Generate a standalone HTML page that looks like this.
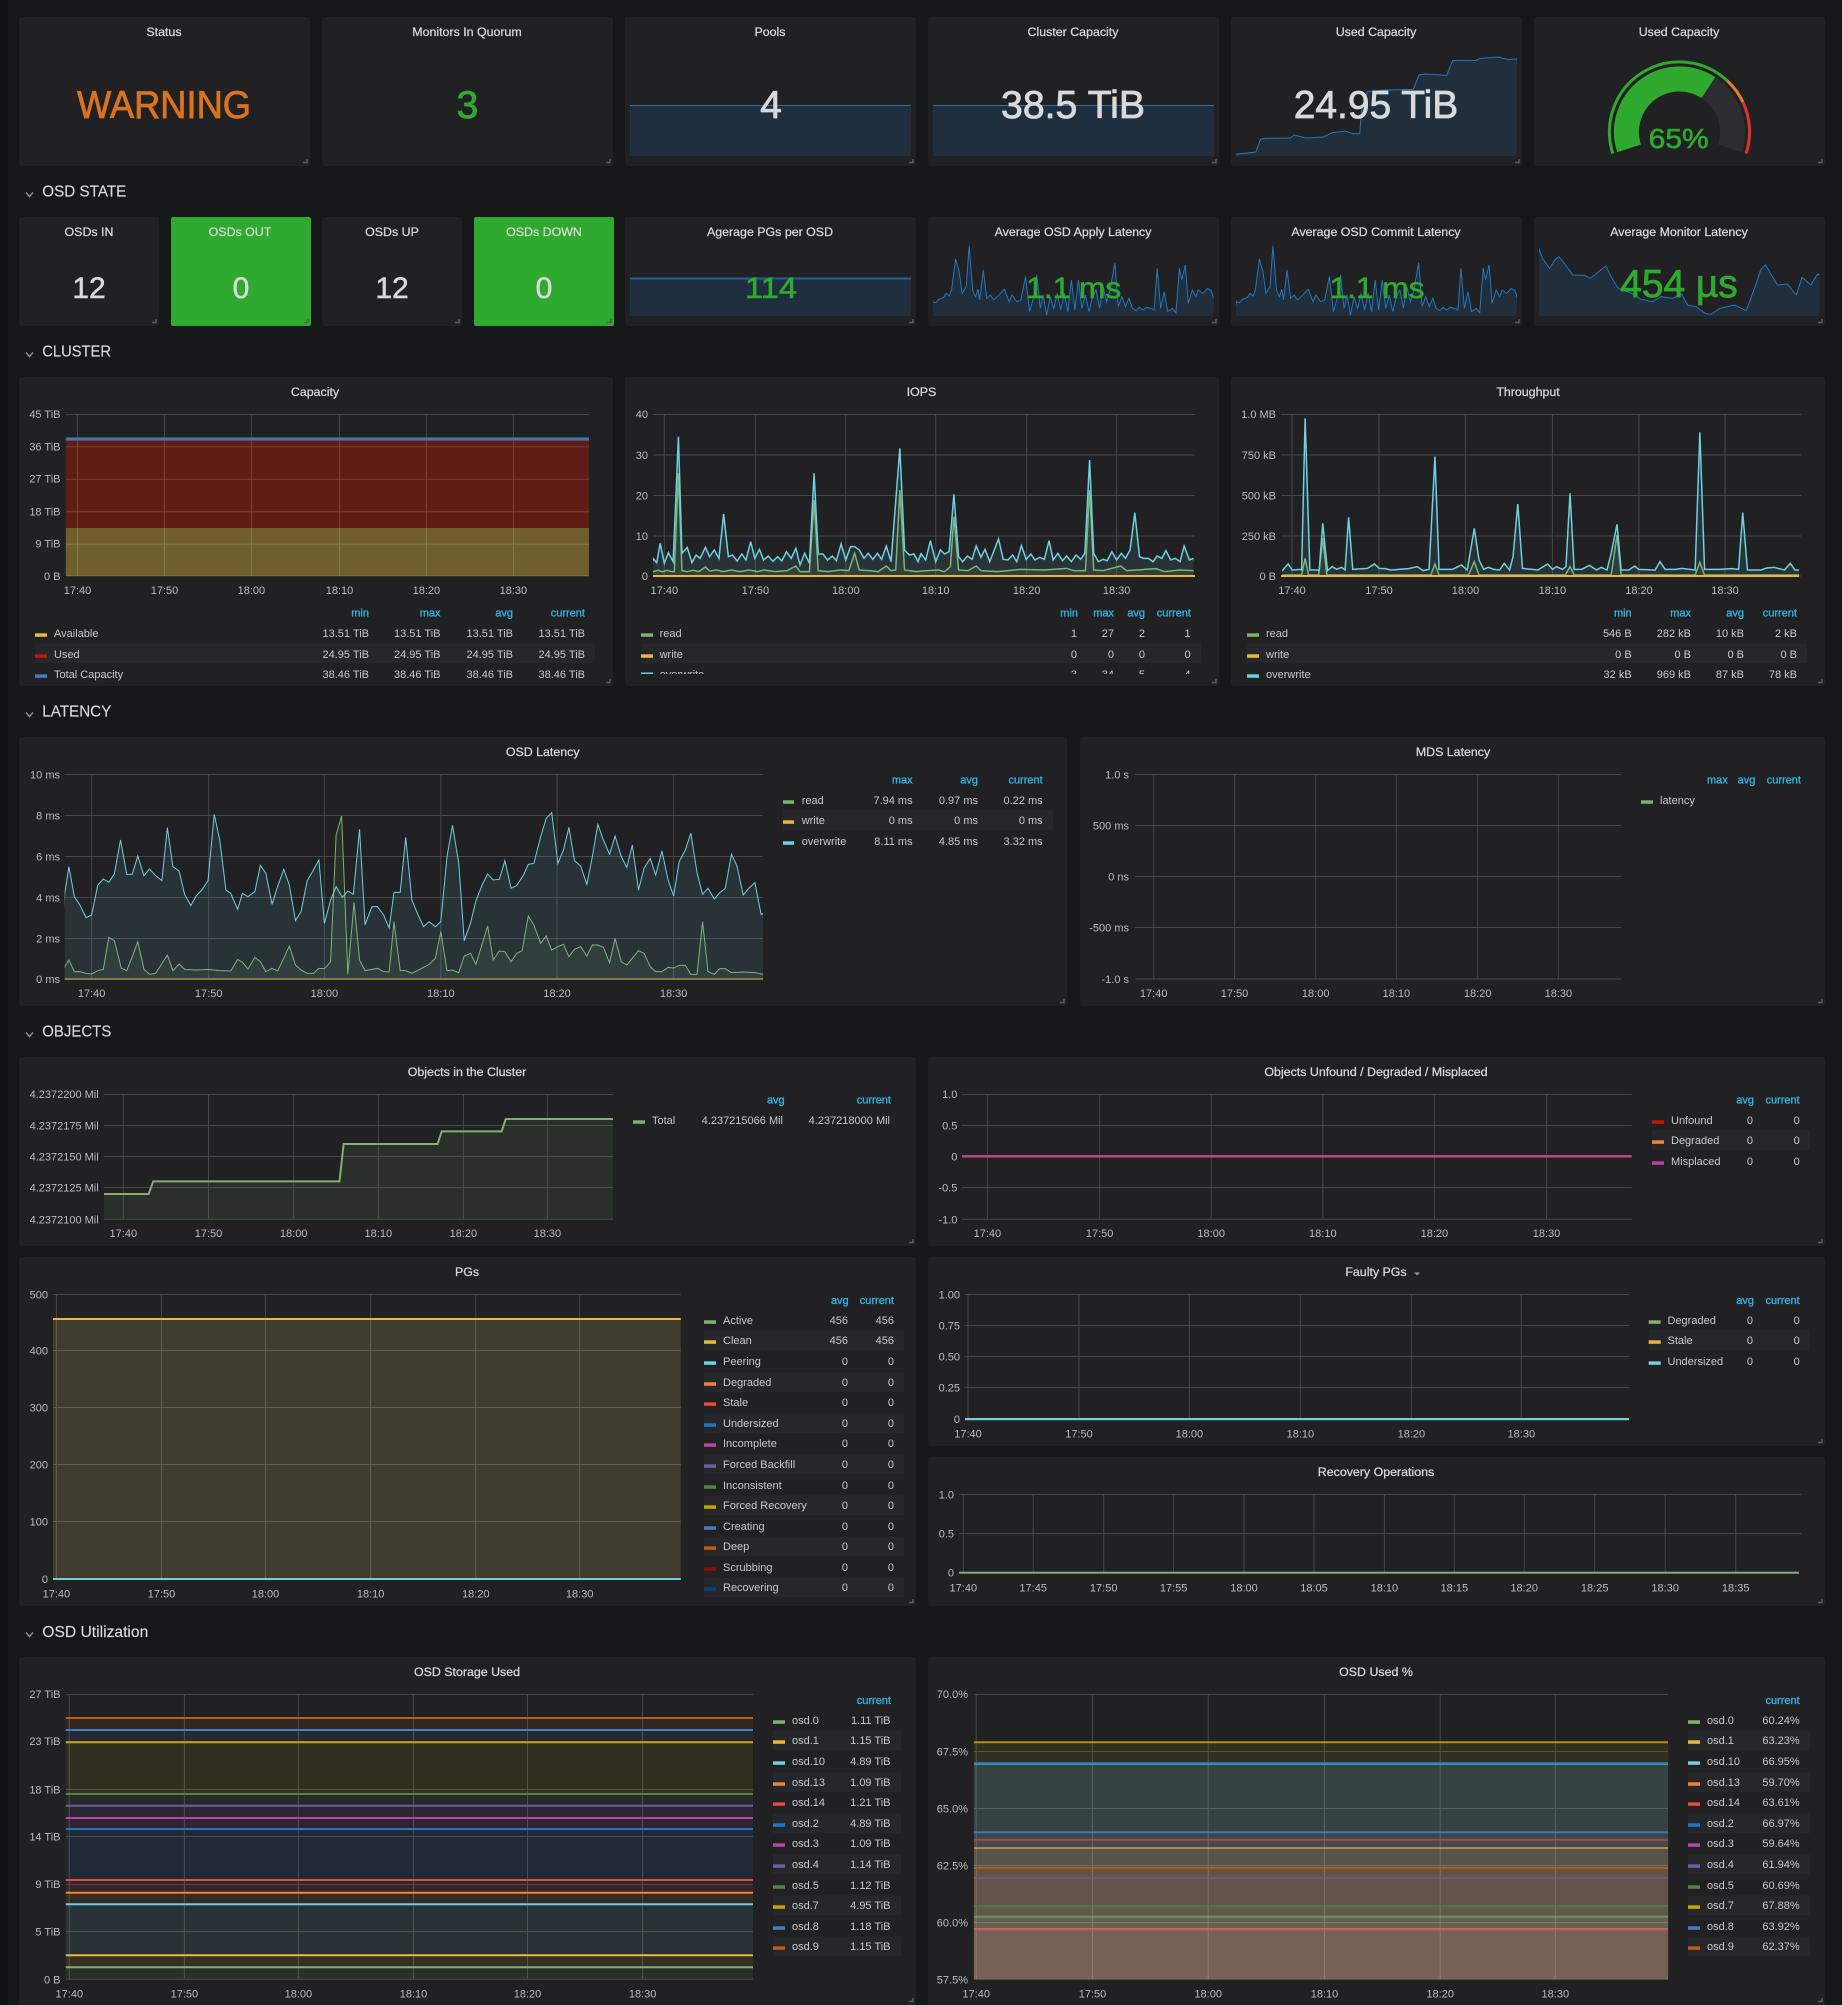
<!DOCTYPE html>
<html lang="en">
<head>
<meta charset="utf-8">
<title>Ceph Cluster Dashboard</title>
<style>
html,body{margin:0;padding:0;background:#161719;width:1842px;height:2005px;overflow:hidden}
svg{display:block}
text{font-family:"Liberation Sans",Arial,sans-serif}
.T{font-size:12.4px;fill:#d8d9da;text-anchor:middle;stroke:#d8d9da;stroke-width:.25}
.S{font-size:15.5px;fill:#d8d9da;stroke:#d8d9da;stroke-width:.15}
.a{font-size:11px;fill:#bcbcbd}
.e{text-anchor:end}
.m{text-anchor:middle}
.L{font-size:11px;fill:#c8c9ca;transform:translateY(-.4px)}
.V{font-size:11px;fill:#c8c9ca;text-anchor:end;transform:translateY(-.4px)}
.H{font-size:11px;fill:#33b5e5;text-anchor:end;stroke:#33b5e5;stroke-width:.3;transform:translateY(-.4px)}
.B{font-size:39px;fill:#d8d9da;text-anchor:middle;stroke:#d8d9da;stroke-width:.8}
.M{font-size:30px;fill:#d8d9da;text-anchor:middle;stroke:#d8d9da;stroke-width:.5}
.G39{font-size:39px;fill:#2fa92e;text-anchor:middle;stroke:#2fa92e;stroke-width:.8}
.G30{font-size:30px;fill:#2fa92e;text-anchor:middle;stroke:#2fa92e;stroke-width:.6}
.g{stroke:rgba(255,255,255,.17);stroke-width:1;fill:none}
.l{vector-effect:non-scaling-stroke;fill:none}
.p{fill:#212124}
.h{fill:none;stroke:#5c5c5e;stroke-width:1.5}
.c{fill:none;stroke:#8e8e8e;stroke-width:1.5}
.r{fill:#26272a}
.sp{vector-effect:non-scaling-stroke;stroke:#1f78c1;stroke-width:1;fill:#1f78c1;fill-opacity:.15}
.ln{vector-effect:non-scaling-stroke}
</style>
</head>
<body>
<svg xmlns="http://www.w3.org/2000/svg" width="1842" height="2005" viewBox="0 0 1842 2005">
<defs>
<clipPath id="cUsed"><rect x="1236" y="40" width="281" height="120"/></clipPath>
<clipPath id="cA"><rect x="933" y="240" width="280.5" height="80"/></clipPath>
<clipPath id="cB"><rect x="1236" y="240" width="281" height="80"/></clipPath>
<clipPath id="cC"><rect x="1539" y="240" width="280.5" height="80"/></clipPath>
<clipPath id="cIL"><rect x="653" y="410" width="268" height="170"/></clipPath>
<clipPath id="cIR"><rect x="921" y="410" width="272.5" height="170"/></clipPath>
<clipPath id="cT"><rect x="1282.2" y="410" width="516.8" height="170"/></clipPath>
<clipPath id="cLat"><rect x="64.7" y="770" width="698.3" height="212"/></clipPath>
<clipPath id="cObj"><rect x="104" y="1090" width="509" height="132"/></clipPath>
<clipPath id="cLeg"><rect x="630" y="600" width="590" height="74"/></clipPath>
</defs>

<rect width="1842" height="2005" fill="#161719"/>
<rect width="8" height="2005" fill="#111214"/>

<!-- panels -->
<rect class="p" x="19" y="17" width="291" height="149" rx="3"/>
<rect class="p" x="322" y="17" width="291" height="149" rx="3"/>
<rect class="p" x="625" y="17" width="291" height="149" rx="3"/>
<rect class="p" x="928" y="17" width="291" height="149" rx="3"/>
<rect class="p" x="1231" y="17" width="291" height="149" rx="3"/>
<rect class="p" x="1534" y="17" width="291" height="149" rx="3"/>
<rect class="p" x="19" y="217" width="140" height="109" rx="3"/>
<rect x="171" y="217" width="140" height="109" rx="2" fill="#2fa92e"/>
<rect class="p" x="322" y="217" width="140" height="109" rx="3"/>
<rect x="474" y="217" width="140" height="109" rx="2" fill="#2fa92e"/>
<rect class="p" x="625" y="217" width="291" height="109" rx="3"/>
<rect class="p" x="928" y="217" width="291" height="109" rx="3"/>
<rect class="p" x="1231" y="217" width="291" height="109" rx="3"/>
<rect class="p" x="1534" y="217" width="291" height="109" rx="3"/>
<rect class="p" x="19" y="377" width="594" height="309" rx="3"/>
<rect class="p" x="625" y="377" width="594" height="309" rx="3"/>
<rect class="p" x="1231" y="377" width="594" height="309" rx="3"/>
<rect class="p" x="19" y="737" width="1048" height="269" rx="3"/>
<rect class="p" x="1080" y="737" width="745" height="269" rx="3"/>
<rect class="p" x="19" y="1057" width="897" height="189" rx="3"/>
<rect class="p" x="928" y="1057" width="897" height="189" rx="3"/>
<rect class="p" x="19" y="1257" width="897" height="349" rx="3"/>
<rect class="p" x="928" y="1257" width="897" height="189" rx="3"/>
<rect class="p" x="928" y="1457" width="897" height="149" rx="3"/>
<rect class="p" x="19" y="1657" width="897" height="360" rx="3"/>
<rect class="p" x="928" y="1657" width="897" height="360" rx="3"/>

<!-- resize handles -->
<path class="h" d="M307 159v3.5h-4M610 159v3.5h-4M913 159v3.5h-4M1216 159v3.5h-4M1519 159v3.5h-4M1822 159v3.5h-4M156 319v3.5h-4M308 319v3.5h-4M459 319v3.5h-4M611 319v3.5h-4M913 319v3.5h-4M1216 319v3.5h-4M1519 319v3.5h-4M1822 319v3.5h-4M610 679v3.5h-4M1216 679v3.5h-4M1822 679v3.5h-4M1064 999v3.5h-4M1822 999v3.5h-4M913 1239v3.5h-4M1822 1239v3.5h-4M913 1599v3.5h-4M1822 1439v3.5h-4M1822 1599v3.5h-4M913 1998v3.5h-4M1822 1998v3.5h-4"/>

<!-- section headers -->
<path class="c" d="M26 192.5l3.5 4 3.5-4M26 352.5l3.5 4 3.5-4M26 712.5l3.5 4 3.5-4M26 1032.5l3.5 4 3.5-4M26 1632.5l3.5 4 3.5-4"/>
<text class="S" x="42.3" y="196.3" textLength="84" lengthAdjust="spacingAndGlyphs">OSD STATE</text>
<text class="S" x="42.3" y="356.6" textLength="68.7" lengthAdjust="spacingAndGlyphs">CLUSTER</text>
<text class="S" x="42.3" y="716.6" textLength="69" lengthAdjust="spacingAndGlyphs">LATENCY</text>
<text class="S" x="42.3" y="1036.3" textLength="69" lengthAdjust="spacingAndGlyphs">OBJECTS</text>
<text class="S" x="42.3" y="1637" textLength="106" lengthAdjust="spacingAndGlyphs">OSD Utilization</text>

<!-- row 1 -->
<text class="T" x="164" y="36">Status</text>
<text class="T" x="467" y="36">Monitors In Quorum</text>
<text class="T" x="770" y="36">Pools</text>
<text class="T" x="1073" y="36">Cluster Capacity</text>
<text class="T" x="1376" y="36">Used Capacity</text>
<text class="T" x="1679" y="36">Used Capacity</text>

<text x="164" y="118" font-size="39" text-anchor="middle" fill="#d9731f" stroke="#d9731f" stroke-width=".8" textLength="174" lengthAdjust="spacingAndGlyphs">WARNING</text>
<text class="G39" x="467.5" y="118">3</text>

<rect x="630" y="105" width="281" height="51" fill="#202f3f"/>
<path d="M630 105.5H911" stroke="#2a6fb0" stroke-width="1"/>
<text class="B" x="771" y="118">4</text>

<rect x="933" y="105" width="281" height="51" fill="#202f3f"/>
<path d="M933 105.5H1214" stroke="#2a6fb0" stroke-width="1"/>
<text class="B" x="1073" y="118" textLength="144" lengthAdjust="spacingAndGlyphs">38.5 TiB</text>

<g clip-path="url(#cUsed)"><g transform="translate(921,0) scale(.58737,.33333)">
<polyline class="sp" points="530,468 536,463 570,456 578,418 585,415 628,414 636,405 655,414 685,411 700,398 715,395 722,393 735,401 747,401 750,330 760,275 790,270 838,268 848,225 858,222 878,224 895,226 905,182 945,181 952,175 985,171 990,175 1000,178 1015,177 1022,468"/>
</g></g>
<text class="B" x="1376" y="118" textLength="164.5" lengthAdjust="spacingAndGlyphs">24.95 TiB</text>

<!-- gauge -->
<path d="M1629.1 148.4A53 53 0 0 1 1708.5 87.6" fill="none" stroke="#2fa92e" stroke-width="25"/>
<path d="M1708.5 87.6A53 53 0 0 1 1729.9 148.4" fill="none" stroke="#2d2d30" stroke-width="25"/>
<path d="M1612.9 153.6A70 70 0 0 1 1727.5 81" fill="none" stroke="#2fa92e" stroke-width="3"/>
<path d="M1727.5 81A70 70 0 0 1 1743 102.2" fill="none" stroke="#e2802b" stroke-width="3"/>
<path d="M1743 102.2A70 70 0 0 1 1746.1 153.6" fill="none" stroke="#e0302f" stroke-width="3"/>
<text x="1678.7" y="148" font-size="28" text-anchor="middle" fill="#2fa92e" stroke="#2fa92e" stroke-width=".6" textLength="60" lengthAdjust="spacingAndGlyphs">65%</text>

<!-- row 2 -->
<text class="T" x="89" y="236">OSDs IN</text>
<text class="T" x="240" y="236">OSDs OUT</text>
<text class="T" x="392" y="236">OSDs UP</text>
<text class="T" x="544" y="236">OSDs DOWN</text>
<text class="T" x="770" y="236">Agerage PGs per OSD</text>
<text class="T" x="1073" y="236">Average OSD Apply Latency</text>
<text class="T" x="1376" y="236">Average OSD Commit Latency</text>
<text class="T" x="1679" y="236">Average Monitor Latency</text>
<text class="M" x="89" y="298">12</text>
<text class="M" x="241" y="298">0</text>
<text class="M" x="392" y="298">12</text>
<text class="M" x="544" y="298">0</text>

<rect x="630" y="278" width="281" height="38" fill="#202f3f"/>
<path d="M630 278.5H911" stroke="#1f5f9d" stroke-width="2"/>
<text class="G30" x="771" y="298" textLength="52" lengthAdjust="spacingAndGlyphs">114</text>

<g clip-path="url(#cA)"><g transform="translate(921,0) scale(.58737,.33333)">
<polyline class="sp" points="14,948 20,905 25,908 30,898 38,893 43,880 48,888 52,870 59,777 65,815 70,880 77,860 82,737 88,870 93,890 97,868 100,900 106,810 112,895 118,885 124,900 130,890 142,868 150,905 155,885 163,905 170,900 178,830 185,935 192,890 197,825 203,925 208,885 214,945 220,890 226,925 232,880 238,930 244,880 250,935 256,840 262,930 268,840 274,925 280,885 286,935 292,890 298,870 304,925 310,860 316,905 322,870 330,788 336,920 342,890 348,920 354,895 360,925 366,932 372,922 378,930 384,922 392,925 397,930 402,805 408,925 414,875 420,935 428,925 434,938 440,805 444,840 450,795 455,910 462,870 468,890 472,870 480,880 488,865 494,872 498,893 504,948"/>
</g></g>
<g clip-path="url(#cB)"><g transform="translate(1224.8,0) scale(.58737,.33333)">
<polyline class="sp" points="14,948 20,905 25,908 30,898 38,893 43,880 48,888 52,870 59,777 65,815 70,880 77,860 82,737 88,870 93,890 97,868 100,900 106,810 112,895 118,885 124,900 130,890 142,868 150,905 155,885 163,905 170,900 178,830 185,935 192,890 197,825 203,925 208,885 214,945 220,890 226,925 232,880 238,930 244,880 250,935 256,840 262,930 268,840 274,925 280,885 286,935 292,890 298,870 304,925 310,860 316,905 322,870 330,788 336,920 342,890 348,920 354,895 360,925 366,932 372,922 378,930 384,922 392,925 397,930 402,805 408,925 414,875 420,935 428,925 434,938 440,805 444,840 450,795 455,910 462,870 468,890 472,870 480,880 488,865 494,872 498,893 504,948"/>
</g></g>
<g clip-path="url(#cC)"><g transform="translate(921,0) scale(.58737,.33333)">
<polyline class="sp" points="1046,948 1052,745 1058,775 1070,805 1080,778 1086,770 1095,790 1110,825 1130,826 1140,835 1150,820 1166,798 1175,830 1185,860 1190,868 1210,880 1225,897 1245,905 1260,890 1280,895 1295,882 1305,915 1320,920 1335,940 1345,943 1360,925 1385,915 1405,932 1420,860 1430,808 1438,795 1458,855 1475,852 1490,885 1500,832 1515,855 1526,823 1531,825 1537,948"/>
</g></g>
<text class="G30" x="1073.7" y="298" textLength="95" lengthAdjust="spacingAndGlyphs">1.1 ms</text>
<text class="G30" x="1377" y="298" textLength="95" lengthAdjust="spacingAndGlyphs">1.1 ms</text>
<text class="G39" x="1679" y="297" textLength="117.5" lengthAdjust="spacingAndGlyphs">454 µs</text>

<!-- CLUSTER: Capacity -->
<text class="T" x="315" y="396">Capacity</text>
<rect x="65.8" y="440" width="523.2" height="88" fill="#5e1d15"/>
<rect x="65.8" y="528" width="523.2" height="48" fill="#705e2d"/>
<path class="g" d="M65.8 414.5H589M65.8 446.8H589M65.8 479.2H589M65.8 511.8H589M65.8 544.2H589M65.8 576H589M77.5 414V576M164.5 414V576M251.4 414V576M339.5 414V576M426.4 414V576M513.4 414V576"/>
<rect x="65.8" y="437.4" width="523.2" height="3.2" fill="#4673b0"/>
<text class="a e" x="60.5" y="418">45 TiB</text>
<text class="a e" x="60.5" y="450.3">36 TiB</text>
<text class="a e" x="60.5" y="482.7">27 TiB</text>
<text class="a e" x="60.5" y="515.3">18 TiB</text>
<text class="a e" x="60.5" y="547.7">9 TiB</text>
<text class="a e" x="60.5" y="580">0 B</text>
<text class="a m" x="77.5" y="594">17:40</text>
<text class="a m" x="164.5" y="594">17:50</text>
<text class="a m" x="251.4" y="594">18:00</text>
<text class="a m" x="339.5" y="594">18:10</text>
<text class="a m" x="426.4" y="594">18:20</text>
<text class="a m" x="513.4" y="594">18:30</text>
<text class="H" x="369" y="617">min</text>
<text class="H" x="440.5" y="617">max</text>
<text class="H" x="513" y="617">avg</text>
<text class="H" x="585" y="617">current</text>
<rect class="r" x="35" y="643.3" width="560" height="19.7"/>
<rect x="35" y="633.3" width="12" height="3.5" fill="#eab839"/>
<rect x="35" y="654.3" width="12" height="3.5" fill="#bf1b00"/>
<rect x="35" y="674.3" width="12" height="3.5" fill="#447ebc"/>
<text class="L" x="54" y="637.3">Available</text>
<text class="L" x="54" y="658.3">Used</text>
<text class="L" x="54" y="678.3">Total Capacity</text>
<text class="V" x="369" y="637.3">13.51 TiB</text><text class="V" x="440.5" y="637.3">13.51 TiB</text><text class="V" x="513" y="637.3">13.51 TiB</text><text class="V" x="585" y="637.3">13.51 TiB</text>
<text class="V" x="369" y="658.3">24.95 TiB</text><text class="V" x="440.5" y="658.3">24.95 TiB</text><text class="V" x="513" y="658.3">24.95 TiB</text><text class="V" x="585" y="658.3">24.95 TiB</text>
<text class="V" x="369" y="678.3">38.46 TiB</text><text class="V" x="440.5" y="678.3">38.46 TiB</text><text class="V" x="513" y="678.3">38.46 TiB</text><text class="V" x="585" y="678.3">38.46 TiB</text>

<!-- CLUSTER: IOPS -->
<text class="T" x="921.5" y="396">IOPS</text>
<path class="g" d="M653 414.5H1195M653 455H1195M653 495.5H1195M653 536H1195M653 576H1195M664.3 414V576M755.4 414V576M845.8 414V576M935.7 414V576M1026.7 414V576M1116.6 414V576"/>
<g clip-path="url(#cIL)"><g transform="translate(0,340) scale(.58737,.33333)">
<polyline class="ln" fill="#7eb26d" fill-opacity=".1" stroke="#7eb26d" stroke-width="1.5" points="1106,708 1112,695 1120,691 1128,695 1136,691 1144,695 1148,695 1155,400 1161,692 1170,695 1180,691 1190,695 1201,681 1208,693 1220,690 1232,695 1245,690 1260,695 1275,690 1290,695 1300,690 1320,695 1340,692 1355,678 1362,695 1378,695 1386,480 1393,692 1410,695 1430,690 1445,692 1455,640 1463,690 1480,692 1495,695 1509,678 1517,692 1525,690 1532,450 1540,690 1560,695 1568,693 1574,708"/>
<polyline class="ln" fill="#6ed0e0" fill-opacity=".1" stroke="#6ed0e0" stroke-width="1.5" points="1106,708 1112,655 1118,668 1124,610 1131,670 1138,638 1146,665 1150,500 1155,290 1161,640 1170,622 1178,668 1185,645 1192,655 1201,622 1208,650 1216,630 1224,655 1232,522 1240,650 1247,645 1255,663 1263,642 1270,660 1278,605 1285,655 1293,628 1300,660 1308,648 1316,664 1324,650 1331,663 1339,635 1347,655 1355,625 1362,675 1370,640 1378,670 1386,400 1393,642 1401,642 1409,660 1417,648 1424,662 1432,612 1440,660 1448,620 1455,620 1463,630 1471,655 1478,640 1486,658 1494,640 1501,658 1509,618 1517,665 1532,325 1540,630 1548,645 1556,642 1563,665 1568,640 1574,708"/>
</g></g>
<g clip-path="url(#cIR)"><g transform="translate(921,340) scale(.58737,.33333)">
<polyline class="ln" fill="#7eb26d" fill-opacity=".1" stroke="#7eb26d" stroke-width="1.5" points="-6,708 0,693 30,690 40,695 50,680 56,530 64,690 80,692 94,678 102,692 130,695 170,688 210,690 248,685 260,692 280,692 287,450 294,690 310,692 340,678 350,692 400,686 415,695 440,690 464,692 470,708"/>
<polyline class="ln" fill="#6ed0e0" fill-opacity=".1" stroke="#6ed0e0" stroke-width="1.5" points="-6,708 0,640 8,660 16,602 25,665 33,630 40,642 48,635 56,463 64,650 71,665 79,648 87,658 94,618 102,652 109,628 117,665 132,597 140,658 148,660 156,645 163,665 171,617 179,658 187,642 194,660 202,652 210,658 218,602 225,660 233,640 241,662 248,648 256,665 264,645 272,658 279,640 287,360 294,640 302,665 310,658 317,662 325,635 333,660 341,640 348,655 356,630 364,518 372,650 379,655 387,655 395,665 402,648 410,655 417,632 425,660 433,655 441,665 448,618 457,660 464,655 470,708"/>
</g></g>
<rect x="653" y="575" width="542" height="2" fill="#eab839"/>
<text class="a e" x="648" y="418">40</text>
<text class="a e" x="648" y="459">30</text>
<text class="a e" x="648" y="499.5">20</text>
<text class="a e" x="648" y="540">10</text>
<text class="a e" x="648" y="580">0</text>
<text class="a m" x="664.3" y="594">17:40</text>
<text class="a m" x="755.4" y="594">17:50</text>
<text class="a m" x="845.8" y="594">18:00</text>
<text class="a m" x="935.7" y="594">18:10</text>
<text class="a m" x="1026.7" y="594">18:20</text>
<text class="a m" x="1116.6" y="594">18:30</text>
<text class="H" x="1078" y="617">min</text>
<text class="H" x="1114" y="617">max</text>
<text class="H" x="1145" y="617">avg</text>
<text class="H" x="1191" y="617">current</text>
<rect class="r" x="641" y="643.3" width="560" height="19.7"/>
<rect x="641" y="633.3" width="12" height="3.5" fill="#7eb26d"/>
<rect x="641" y="654.3" width="12" height="3.5" fill="#eab839"/>
<rect x="641" y="672.5" width="12" height="1.5" fill="#6ed0e0"/>
<text class="L" x="659.6" y="637.3">read</text>
<text class="L" x="659.6" y="658.3">write</text>
<text class="V" x="1077" y="637.3">1</text><text class="V" x="1114" y="637.3">27</text><text class="V" x="1145" y="637.3">2</text><text class="V" x="1190.6" y="637.3">1</text>
<text class="V" x="1077" y="658.3">0</text><text class="V" x="1114" y="658.3">0</text><text class="V" x="1145" y="658.3">0</text><text class="V" x="1190.6" y="658.3">0</text>
<g clip-path="url(#cLeg)">
<text class="L" x="659.6" y="678.3">overwrite</text>
<text class="V" x="1077" y="678.3">3</text><text class="V" x="1114" y="678.3">34</text><text class="V" x="1145" y="678.3">5</text><text class="V" x="1190.6" y="678.3">4</text>
</g>

<!-- CLUSTER: Throughput -->
<text class="T" x="1528" y="396">Throughput</text>
<path class="g" d="M1281 414.5H1801M1281 455H1801M1281 495.5H1801M1281 536H1801M1281 576H1801M1292 414V576M1379 414V576M1465.5 414V576M1552.4 414V576M1639 414V576M1725 414V576"/>
<g clip-path="url(#cT)"><g transform="translate(921,340) scale(.58737,.33333)">
<polyline class="ln" fill="#7eb26d" fill-opacity=".1" stroke="#7eb26d" stroke-width="1.5" points="607,708 613,705 648,705 654,655 660,705 677,705 684,595 691,705 868,705 875,672 882,705 932,705 942,665 950,705 1097,705 1105,680 1112,705 1175,705 1185,585 1192,705 1318,705 1326,667 1334,705 1495,705 1501,708"/>
<polyline class="ln" fill="#6ed0e0" fill-opacity=".1" stroke="#6ed0e0" stroke-width="1.5" points="609,708 615,692 625,672 632,690 645,688 648,690 654,235 662,690 672,690 678,690 684,550 692,692 700,680 708,688 716,682 722,690 728,532 735,688 760,685 772,672 780,685 790,686 800,690 830,686 845,680 855,692 865,688 875,350 882,688 905,688 920,675 930,690 942,565 950,660 958,688 966,682 975,688 985,690 993,670 1002,690 1008,650 1016,492 1024,685 1050,690 1067,672 1075,688 1082,680 1092,688 1098,680 1105,460 1112,688 1125,688 1138,676 1150,690 1158,682 1168,690 1175,640 1185,553 1192,690 1205,690 1215,678 1222,688 1250,690 1258,665 1267,688 1285,688 1295,685 1318,690 1326,277 1334,688 1360,688 1380,686 1392,688 1399,518 1407,690 1430,690 1440,684 1452,682 1470,690 1480,670 1488,690 1495,690 1501,708"/>
</g></g>
<rect x="1281" y="575" width="518" height="2" fill="#eab839"/>
<text class="a e" x="1276" y="418">1.0 MB</text>
<text class="a e" x="1276" y="459">750 kB</text>
<text class="a e" x="1276" y="499.5">500 kB</text>
<text class="a e" x="1276" y="540">250 kB</text>
<text class="a e" x="1276" y="580">0 B</text>
<text class="a m" x="1292" y="594">17:40</text>
<text class="a m" x="1379" y="594">17:50</text>
<text class="a m" x="1465.5" y="594">18:00</text>
<text class="a m" x="1552.4" y="594">18:10</text>
<text class="a m" x="1639" y="594">18:20</text>
<text class="a m" x="1725" y="594">18:30</text>
<text class="H" x="1631.7" y="617">min</text>
<text class="H" x="1691" y="617">max</text>
<text class="H" x="1744" y="617">avg</text>
<text class="H" x="1797" y="617">current</text>
<rect class="r" x="1247" y="643.3" width="560" height="19.7"/>
<rect x="1247" y="633.3" width="12" height="3.5" fill="#7eb26d"/>
<rect x="1247" y="654.3" width="12" height="3.5" fill="#eab839"/>
<rect x="1247" y="674.3" width="12" height="3.5" fill="#6ed0e0"/>
<text class="L" x="1266" y="637.3">read</text>
<text class="L" x="1266" y="658.3">write</text>
<text class="L" x="1266" y="678.3">overwrite</text>
<text class="V" x="1631.7" y="637.3">546 B</text><text class="V" x="1691" y="637.3">282 kB</text><text class="V" x="1744" y="637.3">10 kB</text><text class="V" x="1797" y="637.3">2 kB</text>
<text class="V" x="1631.7" y="658.3">0 B</text><text class="V" x="1691" y="658.3">0 B</text><text class="V" x="1744" y="658.3">0 B</text><text class="V" x="1797" y="658.3">0 B</text>
<text class="V" x="1631.7" y="678.3">32 kB</text><text class="V" x="1691" y="678.3">969 kB</text><text class="V" x="1744" y="678.3">87 kB</text><text class="V" x="1797" y="678.3">78 kB</text>

<!-- LATENCY: OSD -->
<text class="T" x="542.7" y="756">OSD Latency</text>
<path class="g" d="M64.7 774.5H763M64.7 815.5H763M64.7 856.5H763M64.7 897.5H763M64.7 938.5H763M64.7 979H763M91.6 774V979M208.7 774V979M324.4 774V979M440.8 774V979M557 774V979M673.6 774V979"/>
<g clip-path="url(#cLat)"><g transform="translate(0,730) scale(.68878,.33333)">
<polyline class="ln" fill="#7eb26d" fill-opacity=".1" stroke="#7eb26d" stroke-width="1" points="88,747 94,710 100,690 108,725 116,725 125,730 133,732 142,722 150,718 158,622 166,632 176,714 184,722 192,680 200,635 209,718 217,733 226,730 243,675 251,722 260,702 268,718 285,720 302,718 319,722 335,723 345,688 352,697 360,717 370,682 378,695 386,725 395,715 403,723 412,685 420,648 429,705 437,720 446,730 455,730 463,715 471,716 480,695 488,315 496,258 505,733 514,517 522,690 530,722 548,715 557,725 565,726 572,575 581,722 589,722 598,730 615,712 623,703 632,685 640,605 649,722 657,720 666,728 674,678 683,670 691,703 708,588 716,690 725,663 733,665 742,695 750,670 758,662 767,558 775,585 785,640 793,618 801,660 810,650 818,643 826,680 834,658 843,650 852,678 860,645 868,645 876,652 885,698 893,625 902,695 910,705 927,662 935,670 944,710 952,725 961,725 970,712 978,714 986,706 995,706 1003,733 1012,733 1020,575 1028,725 1037,733 1045,716 1053,716 1062,728 1079,726 1096,728 1108,733 1114,747"/>
<polyline class="ln" fill="#6ed0e0" fill-opacity=".1" stroke="#6ed0e0" stroke-width="1" points="88,747 94,490 100,410 108,500 116,525 125,563 133,555 142,465 150,447 158,457 166,432 175,330 184,433 192,433 200,378 209,437 217,417 226,437 235,452 243,293 251,410 260,423 268,493 277,527 285,497 293,480 302,452 311,253 319,330 328,480 335,490 345,538 352,490 360,500 370,485 378,406 386,430 395,523 403,470 412,418 420,465 429,572 437,545 446,452 455,420 463,390 471,580 480,510 488,470 497,502 505,483 513,493 522,298 530,584 540,530 548,530 557,555 565,594 572,487 581,487 589,322 598,510 606,550 615,590 623,575 632,590 640,575 649,380 657,286 666,400 674,632 683,580 691,512 700,465 708,432 716,450 725,448 733,392 742,475 750,467 760,435 767,403 775,400 785,320 793,265 801,248 810,400 818,360 826,292 834,392 843,408 852,463 860,380 868,283 876,330 885,373 893,318 902,380 910,412 918,345 927,480 935,415 944,385 952,435 961,363 970,450 978,498 986,395 995,360 1003,310 1012,428 1020,493 1028,475 1037,507 1045,488 1053,475 1062,373 1070,408 1079,495 1087,475 1096,458 1105,553 1108,550 1114,747"/>
</g></g>
<rect x="64.7" y="978" width="698.3" height="2" fill="#8a7a3e"/>
<text class="a e" x="60" y="778.3">10 ms</text>
<text class="a e" x="60" y="819.3">8 ms</text>
<text class="a e" x="60" y="860.3">6 ms</text>
<text class="a e" x="60" y="901.3">4 ms</text>
<text class="a e" x="60" y="942.3">2 ms</text>
<text class="a e" x="60" y="983">0 ms</text>
<text class="a m" x="91.6" y="997">17:40</text>
<text class="a m" x="208.7" y="997">17:50</text>
<text class="a m" x="324.4" y="997">18:00</text>
<text class="a m" x="440.8" y="997">18:10</text>
<text class="a m" x="557" y="997">18:20</text>
<text class="a m" x="673.6" y="997">18:30</text>
<text class="H" x="912.6" y="784">max</text>
<text class="H" x="978" y="784">avg</text>
<text class="H" x="1042.7" y="784">current</text>
<rect class="r" x="783" y="810" width="270" height="20"/>
<rect x="783" y="800.3" width="11" height="3.5" fill="#7eb26d"/>
<rect x="783" y="820.3" width="11" height="3.5" fill="#eab839"/>
<rect x="783" y="841.3" width="11" height="3.5" fill="#6ed0e0"/>
<text class="L" x="801.7" y="804.3">read</text>
<text class="L" x="801.7" y="824.3">write</text>
<text class="L" x="801.7" y="845.3">overwrite</text>
<text class="V" x="912.6" y="804.3">7.94 ms</text><text class="V" x="978" y="804.3">0.97 ms</text><text class="V" x="1042.7" y="804.3">0.22 ms</text>
<text class="V" x="912.6" y="824.3">0 ms</text><text class="V" x="978" y="824.3">0 ms</text><text class="V" x="1042.7" y="824.3">0 ms</text>
<text class="V" x="912.6" y="845.3">8.11 ms</text><text class="V" x="978" y="845.3">4.85 ms</text><text class="V" x="1042.7" y="845.3">3.32 ms</text>

<!-- LATENCY: MDS -->
<text class="T" x="1453" y="756">MDS Latency</text>
<path class="g" d="M1135 774.5H1621M1135 825.5H1621M1135 876.5H1621M1135 927.5H1621M1135 979H1621M1153.7 774V979M1234.5 774V979M1315.7 774V979M1396.4 774V979M1477.7 774V979M1558.4 774V979"/>
<text class="a e" x="1129" y="778.3">1.0 s</text>
<text class="a e" x="1129" y="829.3">500 ms</text>
<text class="a e" x="1129" y="880.3">0 ns</text>
<text class="a e" x="1129" y="931.3">-500 ms</text>
<text class="a e" x="1129" y="983">-1.0 s</text>
<text class="a m" x="1153.7" y="997">17:40</text>
<text class="a m" x="1234.5" y="997">17:50</text>
<text class="a m" x="1315.7" y="997">18:00</text>
<text class="a m" x="1396.4" y="997">18:10</text>
<text class="a m" x="1477.7" y="997">18:20</text>
<text class="a m" x="1558.4" y="997">18:30</text>
<text class="H" x="1727.8" y="784">max</text>
<text class="H" x="1755.4" y="784">avg</text>
<text class="H" x="1801" y="784">current</text>
<rect x="1641" y="800.3" width="12" height="3.5" fill="#7eb26d"/>
<text class="L" x="1660" y="804.3">latency</text>

<!-- OBJECTS: cluster -->
<text class="T" x="467" y="1076">Objects in the Cluster</text>
<path class="g" d="M104 1094.5H613M104 1125.5H613M104 1156.5H613M104 1187.5H613M104 1219.3H613M123.3 1094V1219M208.5 1094V1219M293.7 1094V1219M378.3 1094V1219M463.4 1094V1219M547.4 1094V1219"/>
<g clip-path="url(#cObj)"><g transform="translate(0,1020) scale(.58737,.33333)">
<polyline class="ln" fill="#7eb26d" fill-opacity=".1" stroke="#7eb26d" stroke-width="2" points="170,598 172,522 253,522 261,484 578,484 585,372 745,372 752,334 854,334 861,297 1050,297 1052,598"/>
</g></g>
<text class="a e" x="98.7" y="1098">4.2372200 Mil</text>
<text class="a e" x="98.7" y="1129.3">4.2372175 Mil</text>
<text class="a e" x="98.7" y="1160.3">4.2372150 Mil</text>
<text class="a e" x="98.7" y="1191.3">4.2372125 Mil</text>
<text class="a e" x="98.7" y="1223.3">4.2372100 Mil</text>
<text class="a m" x="123.3" y="1237">17:40</text>
<text class="a m" x="208.5" y="1237">17:50</text>
<text class="a m" x="293.7" y="1237">18:00</text>
<text class="a m" x="378.3" y="1237">18:10</text>
<text class="a m" x="463.4" y="1237">18:20</text>
<text class="a m" x="547.4" y="1237">18:30</text>
<text class="H" x="784.7" y="1104">avg</text>
<text class="H" x="891" y="1104">current</text>
<rect x="633" y="1120.3" width="12" height="3.5" fill="#7eb26d"/>
<text class="L" x="652" y="1124.3">Total</text>
<text class="V" x="783" y="1124.3">4.237215066 Mil</text>
<text class="V" x="890" y="1124.3">4.237218000 Mil</text>

<!-- OBJECTS: unfound -->
<text class="T" x="1376" y="1076">Objects Unfound / Degraded / Misplaced</text>
<path class="g" d="M962 1094.5H1631.7M962 1125.5H1631.7M962 1156.5H1631.7M962 1187.5H1631.7M962 1219.3H1631.7M987.4 1094V1219M1099.6 1094V1219M1211.2 1094V1219M1322.8 1094V1219M1434.4 1094V1219M1546.5 1094V1219"/>
<rect x="962" y="1155" width="669.7" height="2.6" fill="#b6458f"/>
<text class="a e" x="957.4" y="1098">1.0</text>
<text class="a e" x="957.4" y="1129.3">0.5</text>
<text class="a e" x="957.4" y="1160.3">0</text>
<text class="a e" x="957.4" y="1191.3">-0.5</text>
<text class="a e" x="957.4" y="1223.3">-1.0</text>
<text class="a m" x="987.4" y="1237">17:40</text>
<text class="a m" x="1099.6" y="1237">17:50</text>
<text class="a m" x="1211.2" y="1237">18:00</text>
<text class="a m" x="1322.8" y="1237">18:10</text>
<text class="a m" x="1434.4" y="1237">18:20</text>
<text class="a m" x="1546.5" y="1237">18:30</text>
<text class="H" x="1754" y="1104">avg</text>
<text class="H" x="1799.7" y="1104">current</text>
<rect class="r" x="1652" y="1130" width="158" height="20"/>
<rect x="1652" y="1120.3" width="12" height="3.5" fill="#bf1b00"/>
<rect x="1652" y="1140.3" width="12" height="3.5" fill="#ef843c"/>
<rect x="1652" y="1161.3" width="12" height="3.5" fill="#ba43a9"/>
<text class="L" x="1671" y="1124.3">Unfound</text>
<text class="L" x="1671" y="1144.3">Degraded</text>
<text class="L" x="1671" y="1165.3">Misplaced</text>
<text class="V" x="1753" y="1124.3">0</text><text class="V" x="1799.7" y="1124.3">0</text>
<text class="V" x="1753" y="1144.3">0</text><text class="V" x="1799.7" y="1144.3">0</text>
<text class="V" x="1753" y="1165.3">0</text><text class="V" x="1799.7" y="1165.3">0</text>

<!-- PGs -->
<text class="T" x="467" y="1276">PGs</text>
<rect x="53" y="1319" width="627.8" height="260" fill="#3f3c2d"/>
<path class="g" d="M53 1294.5H680.8M53 1350.5H680.8M53 1407.5H680.8M53 1464.5H680.8M53 1521.5H680.8M56.4 1294V1579M161.5 1294V1579M265.5 1294V1579M370.6 1294V1579M475.8 1294V1579M579.7 1294V1579"/>
<rect x="53" y="1318" width="627.8" height="2" fill="#eab839"/>
<rect x="53" y="1578" width="627.8" height="2" fill="#6ed0e0"/>
<text class="a e" x="48" y="1298.3">500</text>
<text class="a e" x="48" y="1354.3">400</text>
<text class="a e" x="48" y="1411.3">300</text>
<text class="a e" x="48" y="1468.3">200</text>
<text class="a e" x="48" y="1525.3">100</text>
<text class="a e" x="48" y="1583">0</text>
<text class="a m" x="56.4" y="1597.3">17:40</text>
<text class="a m" x="161.5" y="1597.3">17:50</text>
<text class="a m" x="265.5" y="1597.3">18:00</text>
<text class="a m" x="370.6" y="1597.3">18:10</text>
<text class="a m" x="475.8" y="1597.3">18:20</text>
<text class="a m" x="579.7" y="1597.3">18:30</text>
<text class="H" x="848.7" y="1304.3">avg</text>
<text class="H" x="894" y="1304.3">current</text>
<g transform="translate(704,1320.3)"><rect width="12" height="3.5" fill="#7eb26d"/><text class="L" x="19" y="4">Active</text><text class="V" x="144" y="4">456</text><text class="V" x="190" y="4">456</text></g>
<g transform="translate(704,1340.3)"><rect class="r" y="-10" width="200" height="20"/><rect width="12" height="3.5" fill="#eab839"/><text class="L" x="19" y="4">Clean</text><text class="V" x="144" y="4">456</text><text class="V" x="190" y="4">456</text></g>
<g transform="translate(704,1361.3)"><rect width="12" height="3.5" fill="#6ed0e0"/><text class="L" x="19" y="4">Peering</text><text class="V" x="144" y="4">0</text><text class="V" x="190" y="4">0</text></g>
<g transform="translate(704,1382.3)"><rect class="r" y="-10" width="200" height="20"/><rect width="12" height="3.5" fill="#ef843c"/><text class="L" x="19" y="4">Degraded</text><text class="V" x="144" y="4">0</text><text class="V" x="190" y="4">0</text></g>
<g transform="translate(704,1402.3)"><rect width="12" height="3.5" fill="#e24d42"/><text class="L" x="19" y="4">Stale</text><text class="V" x="144" y="4">0</text><text class="V" x="190" y="4">0</text></g>
<g transform="translate(704,1423.3)"><rect class="r" y="-10" width="200" height="20"/><rect width="12" height="3.5" fill="#1f78c1"/><text class="L" x="19" y="4">Undersized</text><text class="V" x="144" y="4">0</text><text class="V" x="190" y="4">0</text></g>
<g transform="translate(704,1443.3)"><rect width="12" height="3.5" fill="#ba43a9"/><text class="L" x="19" y="4">Incomplete</text><text class="V" x="144" y="4">0</text><text class="V" x="190" y="4">0</text></g>
<g transform="translate(704,1464.3)"><rect class="r" y="-10" width="200" height="20"/><rect width="12" height="3.5" fill="#705da0"/><text class="L" x="19" y="4">Forced Backfill</text><text class="V" x="144" y="4">0</text><text class="V" x="190" y="4">0</text></g>
<g transform="translate(704,1485.3)"><rect width="12" height="3.5" fill="#508642"/><text class="L" x="19" y="4">Inconsistent</text><text class="V" x="144" y="4">0</text><text class="V" x="190" y="4">0</text></g>
<g transform="translate(704,1505.3)"><rect class="r" y="-10" width="200" height="20"/><rect width="12" height="3.5" fill="#cca300"/><text class="L" x="19" y="4">Forced Recovery</text><text class="V" x="144" y="4">0</text><text class="V" x="190" y="4">0</text></g>
<g transform="translate(704,1526.3)"><rect width="12" height="3.5" fill="#447ebc"/><text class="L" x="19" y="4">Creating</text><text class="V" x="144" y="4">0</text><text class="V" x="190" y="4">0</text></g>
<g transform="translate(704,1546.3)"><rect class="r" y="-10" width="200" height="20"/><rect width="12" height="3.5" fill="#c15c17"/><text class="L" x="19" y="4">Deep</text><text class="V" x="144" y="4">0</text><text class="V" x="190" y="4">0</text></g>
<g transform="translate(704,1567.3)"><rect width="12" height="3.5" fill="#890f02"/><text class="L" x="19" y="4">Scrubbing</text><text class="V" x="144" y="4">0</text><text class="V" x="190" y="4">0</text></g>
<g transform="translate(704,1587.3)"><rect class="r" y="-10" width="200" height="20"/><rect width="12" height="3.5" fill="#0a437c"/><text class="L" x="19" y="4">Recovering</text><text class="V" x="144" y="4">0</text><text class="V" x="190" y="4">0</text></g>

<!-- Faulty PGs -->
<text class="T" x="1376" y="1276">Faulty PGs</text>
<path d="M1414 1272.5h6l-3 3z" fill="#9a9a9c"/>
<path class="g" d="M965 1294.5H1629M965 1325.5H1629M965 1356.5H1629M965 1387.5H1629M968 1294V1419M1079 1294V1419M1189.4 1294V1419M1300.4 1294V1419M1411.4 1294V1419M1521.3 1294V1419"/>
<rect x="965" y="1418" width="664" height="2.2" fill="#6ed0e0"/>
<text class="a e" x="960" y="1298.3">1.00</text>
<text class="a e" x="960" y="1329.3">0.75</text>
<text class="a e" x="960" y="1360.3">0.50</text>
<text class="a e" x="960" y="1391.3">0.25</text>
<text class="a e" x="960" y="1423">0</text>
<text class="a m" x="968" y="1437.3">17:40</text>
<text class="a m" x="1079" y="1437.3">17:50</text>
<text class="a m" x="1189.4" y="1437.3">18:00</text>
<text class="a m" x="1300.4" y="1437.3">18:10</text>
<text class="a m" x="1411.4" y="1437.3">18:20</text>
<text class="a m" x="1521.3" y="1437.3">18:30</text>
<text class="H" x="1754" y="1304.3">avg</text>
<text class="H" x="1799.7" y="1304.3">current</text>
<rect class="r" x="1648.7" y="1330" width="161" height="20"/>
<rect x="1648.7" y="1320.3" width="12" height="3.5" fill="#7eb26d"/>
<rect x="1648.7" y="1340.3" width="12" height="3.5" fill="#eab839"/>
<rect x="1648.7" y="1361.3" width="12" height="3.5" fill="#6ed0e0"/>
<text class="L" x="1667.5" y="1324.3">Degraded</text>
<text class="L" x="1667.5" y="1344.3">Stale</text>
<text class="L" x="1667.5" y="1365.3">Undersized</text>
<text class="V" x="1753" y="1324.3">0</text><text class="V" x="1799.7" y="1324.3">0</text>
<text class="V" x="1753" y="1344.3">0</text><text class="V" x="1799.7" y="1344.3">0</text>
<text class="V" x="1753" y="1365.3">0</text><text class="V" x="1799.7" y="1365.3">0</text>

<!-- Recovery Operations -->
<text class="T" x="1376" y="1476">Recovery Operations</text>
<path class="g" d="M959 1494.5H1801M959 1533.5H1801M963.3 1494V1573M1033.2 1494V1573M1103.7 1494V1573M1173.6 1494V1573M1244 1494V1573M1314 1494V1573M1384.4 1494V1573M1454.3 1494V1573M1524.2 1494V1573M1594.7 1494V1573M1665.2 1494V1573M1735.7 1494V1573"/>
<rect x="959" y="1571.7" width="840" height="2" fill="#7eb26d"/>
<text class="a e" x="954" y="1498.3">1.0</text>
<text class="a e" x="954" y="1537.3">0.5</text>
<text class="a e" x="954" y="1576.7">0</text>
<text class="a m" x="963.3" y="1591.3">17:40</text>
<text class="a m" x="1033.2" y="1591.3">17:45</text>
<text class="a m" x="1103.7" y="1591.3">17:50</text>
<text class="a m" x="1173.6" y="1591.3">17:55</text>
<text class="a m" x="1244" y="1591.3">18:00</text>
<text class="a m" x="1314" y="1591.3">18:05</text>
<text class="a m" x="1384.4" y="1591.3">18:10</text>
<text class="a m" x="1454.3" y="1591.3">18:15</text>
<text class="a m" x="1524.2" y="1591.3">18:20</text>
<text class="a m" x="1594.7" y="1591.3">18:25</text>
<text class="a m" x="1665.2" y="1591.3">18:30</text>
<text class="a m" x="1735.7" y="1591.3">18:35</text>

<!-- OSD Storage Used -->
<text class="T" x="467" y="1676">OSD Storage Used</text>
<g transform="translate(0,1620) scale(.58737,.33333)">
<rect x="112" y="1042" width="1170" height="36" fill="#7eb26d" fill-opacity=".1"/>
<rect x="112" y="1006" width="1170" height="36" fill="#eab839" fill-opacity=".1"/>
<rect x="112" y="853" width="1170" height="153" fill="#6ed0e0" fill-opacity=".1"/>
<rect x="112" y="818" width="1170" height="35" fill="#ef843c" fill-opacity=".1"/>
<rect x="112" y="780" width="1170" height="38" fill="#e24d42" fill-opacity=".1"/>
<rect x="112" y="627" width="1170" height="153" fill="#1f78c1" fill-opacity=".1"/>
<rect x="112" y="594" width="1170" height="33" fill="#ba43a9" fill-opacity=".1"/>
<rect x="112" y="557" width="1170" height="37" fill="#705da0" fill-opacity=".1"/>
<rect x="112" y="522" width="1170" height="35" fill="#508642" fill-opacity=".1"/>
<rect x="112" y="367" width="1170" height="155" fill="#cca300" fill-opacity=".1"/>
<rect x="112" y="330" width="1170" height="37" fill="#447ebc" fill-opacity=".1"/>
<rect x="112" y="294" width="1170" height="36" fill="#c15c17" fill-opacity=".1"/>
</g>
<path class="g" d="M65.8 1694.5H753M65.8 1741.5H753M65.8 1789.5H753M65.8 1836.5H753M65.8 1884.5H753M65.8 1931.5H753M65.8 1979.3H753M69.3 1694V1979M184.4 1694V1979M298.4 1694V1979M413.5 1694V1979M527.5 1694V1979M642.6 1694V1979"/>
<g stroke-width="2" fill="none">
<path d="M65.8 1967.3H753" stroke="#7eb26d"/>
<path d="M65.8 1955.3H753" stroke="#eab839"/>
<path d="M65.8 1904.3H753" stroke="#6ed0e0"/>
<path d="M65.8 1892.7H753" stroke="#ef843c"/>
<path d="M65.8 1880H753" stroke="#e24d42"/>
<path d="M65.8 1829H753" stroke="#1f78c1"/>
<path d="M65.8 1818H753" stroke="#ba43a9"/>
<path d="M65.8 1805.7H753" stroke="#705da0"/>
<path d="M65.8 1794H753" stroke="#508642"/>
<path d="M65.8 1742.3H753" stroke="#cca300"/>
<path d="M65.8 1730H753" stroke="#447ebc"/>
<path d="M65.8 1718H753" stroke="#c15c17"/>
</g>
<text class="a e" x="60.5" y="1698">27 TiB</text>
<text class="a e" x="60.5" y="1745">23 TiB</text>
<text class="a e" x="60.5" y="1793.3">18 TiB</text>
<text class="a e" x="60.5" y="1840.3">14 TiB</text>
<text class="a e" x="60.5" y="1888">9 TiB</text>
<text class="a e" x="60.5" y="1935.3">5 TiB</text>
<text class="a e" x="60.5" y="1983.3">0 B</text>
<text class="a m" x="69.3" y="1997.3">17:40</text>
<text class="a m" x="184.4" y="1997.3">17:50</text>
<text class="a m" x="298.4" y="1997.3">18:00</text>
<text class="a m" x="413.5" y="1997.3">18:10</text>
<text class="a m" x="527.5" y="1997.3">18:20</text>
<text class="a m" x="642.6" y="1997.3">18:30</text>
<text class="H" x="891" y="1704.3">current</text>
<g transform="translate(773,1720.3)"><rect width="12" height="3.5" fill="#7eb26d"/><text class="L" x="19" y="4">osd.0</text><text class="V" x="117.5" y="4">1.11 TiB</text></g>
<g transform="translate(773,1740.3)"><rect class="r" y="-10" width="128" height="20"/><rect width="12" height="3.5" fill="#eab839"/><text class="L" x="19" y="4">osd.1</text><text class="V" x="117.5" y="4">1.15 TiB</text></g>
<g transform="translate(773,1761.3)"><rect width="12" height="3.5" fill="#6ed0e0"/><text class="L" x="19" y="4">osd.10</text><text class="V" x="117.5" y="4">4.89 TiB</text></g>
<g transform="translate(773,1782.3)"><rect class="r" y="-10" width="128" height="20"/><rect width="12" height="3.5" fill="#ef843c"/><text class="L" x="19" y="4">osd.13</text><text class="V" x="117.5" y="4">1.09 TiB</text></g>
<g transform="translate(773,1802.3)"><rect width="12" height="3.5" fill="#e24d42"/><text class="L" x="19" y="4">osd.14</text><text class="V" x="117.5" y="4">1.21 TiB</text></g>
<g transform="translate(773,1823.3)"><rect class="r" y="-10" width="128" height="20"/><rect width="12" height="3.5" fill="#1f78c1"/><text class="L" x="19" y="4">osd.2</text><text class="V" x="117.5" y="4">4.89 TiB</text></g>
<g transform="translate(773,1843.3)"><rect width="12" height="3.5" fill="#ba43a9"/><text class="L" x="19" y="4">osd.3</text><text class="V" x="117.5" y="4">1.09 TiB</text></g>
<g transform="translate(773,1864.3)"><rect class="r" y="-10" width="128" height="20"/><rect width="12" height="3.5" fill="#705da0"/><text class="L" x="19" y="4">osd.4</text><text class="V" x="117.5" y="4">1.14 TiB</text></g>
<g transform="translate(773,1885.3)"><rect width="12" height="3.5" fill="#508642"/><text class="L" x="19" y="4">osd.5</text><text class="V" x="117.5" y="4">1.12 TiB</text></g>
<g transform="translate(773,1905.3)"><rect class="r" y="-10" width="128" height="20"/><rect width="12" height="3.5" fill="#cca300"/><text class="L" x="19" y="4">osd.7</text><text class="V" x="117.5" y="4">4.95 TiB</text></g>
<g transform="translate(773,1926.3)"><rect width="12" height="3.5" fill="#447ebc"/><text class="L" x="19" y="4">osd.8</text><text class="V" x="117.5" y="4">1.18 TiB</text></g>
<g transform="translate(773,1946.3)"><rect class="r" y="-10" width="128" height="20"/><rect width="12" height="3.5" fill="#c15c17"/><text class="L" x="19" y="4">osd.9</text><text class="V" x="117.5" y="4">1.15 TiB</text></g>

<!-- OSD Used % -->
<text class="T" x="1376" y="1676">OSD Used %</text>
<g transform="translate(921,1620) scale(.58737,.33333)">
<rect x="90" y="367" width="1182" height="711" fill="#cca300" fill-opacity=".1"/>
<rect x="90" y="431" width="1182" height="647" fill="#6ed0e0" fill-opacity=".1"/>
<rect x="90" y="429" width="1182" height="649" fill="#1f78c1" fill-opacity=".1"/>
<rect x="90" y="637" width="1182" height="441" fill="#447ebc" fill-opacity=".1"/>
<rect x="90" y="659" width="1182" height="419" fill="#e24d42" fill-opacity=".1"/>
<rect x="90" y="684" width="1182" height="394" fill="#eab839" fill-opacity=".1"/>
<rect x="90" y="744" width="1182" height="334" fill="#c15c17" fill-opacity=".1"/>
<rect x="90" y="773" width="1182" height="305" fill="#705da0" fill-opacity=".1"/>
<rect x="90" y="858" width="1182" height="220" fill="#508642" fill-opacity=".1"/>
<rect x="90" y="890" width="1182" height="188" fill="#7eb26d" fill-opacity=".1"/>
<rect x="90" y="927" width="1182" height="151" fill="#ef843c" fill-opacity=".1"/>
<rect x="90" y="931" width="1182" height="147" fill="#ba43a9" fill-opacity=".1"/>
</g>
<path class="g" d="M973.9 1694.5H1668M973.9 1751.5H1668M973.9 1808.5H1668M973.9 1865.5H1668M973.9 1922.5H1668M973.9 1979.3H1668M976.2 1694V1979M1092.5 1694V1979M1208.2 1694V1979M1324.5 1694V1979M1440.2 1694V1979M1555.3 1694V1979"/>
<g stroke-width="2" fill="none">
<path d="M973.9 1742.3H1668" stroke="#cca300" stroke-opacity=".85"/>
<path d="M973.9 1763.7H1668" stroke="#6ed0e0" stroke-opacity=".7"/>
<path d="M973.9 1763H1668" stroke="#1f78c1" stroke-opacity=".85"/>
<path d="M973.9 1832.3H1668" stroke="#447ebc" stroke-opacity=".85"/>
<path d="M973.9 1839.7H1668" stroke="#e24d42" stroke-opacity=".6"/>
<path d="M973.9 1848H1668" stroke="#eab839" stroke-opacity=".6"/>
<path d="M973.9 1868H1668" stroke="#c15c17" stroke-opacity=".9"/>
<path d="M973.9 1877.7H1668" stroke="#705da0" stroke-opacity=".7"/>
<path d="M973.9 1906H1668" stroke="#508642" stroke-opacity=".7"/>
<path d="M973.9 1916.7H1668" stroke="#7eb26d" stroke-opacity=".6"/>
<path d="M973.9 1929H1668" stroke="#ef843c" stroke-opacity=".6"/>
<path d="M973.9 1930.3H1668" stroke="#ba43a9" stroke-opacity=".6"/>
</g>
<text class="a e" x="968" y="1698">70.0%</text>
<text class="a e" x="968" y="1755.3">67.5%</text>
<text class="a e" x="968" y="1812.3">65.0%</text>
<text class="a e" x="968" y="1869.3">62.5%</text>
<text class="a e" x="968" y="1926.3">60.0%</text>
<text class="a e" x="968" y="1983.3">57.5%</text>
<text class="a m" x="976.2" y="1997.3">17:40</text>
<text class="a m" x="1092.5" y="1997.3">17:50</text>
<text class="a m" x="1208.2" y="1997.3">18:00</text>
<text class="a m" x="1324.5" y="1997.3">18:10</text>
<text class="a m" x="1440.2" y="1997.3">18:20</text>
<text class="a m" x="1555.3" y="1997.3">18:30</text>
<text class="H" x="1799.7" y="1704.3">current</text>
<g transform="translate(1688,1720.3)"><rect width="12" height="3.5" fill="#7eb26d"/><text class="L" x="19" y="4">osd.0</text><text class="V" x="111.7" y="4">60.24%</text></g>
<g transform="translate(1688,1740.3)"><rect class="r" y="-10" width="122" height="20"/><rect width="12" height="3.5" fill="#eab839"/><text class="L" x="19" y="4">osd.1</text><text class="V" x="111.7" y="4">63.23%</text></g>
<g transform="translate(1688,1761.3)"><rect width="12" height="3.5" fill="#6ed0e0"/><text class="L" x="19" y="4">osd.10</text><text class="V" x="111.7" y="4">66.95%</text></g>
<g transform="translate(1688,1782.3)"><rect class="r" y="-10" width="122" height="20"/><rect width="12" height="3.5" fill="#ef843c"/><text class="L" x="19" y="4">osd.13</text><text class="V" x="111.7" y="4">59.70%</text></g>
<g transform="translate(1688,1802.3)"><rect width="12" height="3.5" fill="#e24d42"/><text class="L" x="19" y="4">osd.14</text><text class="V" x="111.7" y="4">63.61%</text></g>
<g transform="translate(1688,1823.3)"><rect class="r" y="-10" width="122" height="20"/><rect width="12" height="3.5" fill="#1f78c1"/><text class="L" x="19" y="4">osd.2</text><text class="V" x="111.7" y="4">66.97%</text></g>
<g transform="translate(1688,1843.3)"><rect width="12" height="3.5" fill="#ba43a9"/><text class="L" x="19" y="4">osd.3</text><text class="V" x="111.7" y="4">59.64%</text></g>
<g transform="translate(1688,1864.3)"><rect class="r" y="-10" width="122" height="20"/><rect width="12" height="3.5" fill="#705da0"/><text class="L" x="19" y="4">osd.4</text><text class="V" x="111.7" y="4">61.94%</text></g>
<g transform="translate(1688,1885.3)"><rect width="12" height="3.5" fill="#508642"/><text class="L" x="19" y="4">osd.5</text><text class="V" x="111.7" y="4">60.69%</text></g>
<g transform="translate(1688,1905.3)"><rect class="r" y="-10" width="122" height="20"/><rect width="12" height="3.5" fill="#cca300"/><text class="L" x="19" y="4">osd.7</text><text class="V" x="111.7" y="4">67.88%</text></g>
<g transform="translate(1688,1926.3)"><rect width="12" height="3.5" fill="#447ebc"/><text class="L" x="19" y="4">osd.8</text><text class="V" x="111.7" y="4">63.92%</text></g>
<g transform="translate(1688,1946.3)"><rect class="r" y="-10" width="122" height="20"/><rect width="12" height="3.5" fill="#c15c17"/><text class="L" x="19" y="4">osd.9</text><text class="V" x="111.7" y="4">62.37%</text></g>
</svg>
</body>
</html>
